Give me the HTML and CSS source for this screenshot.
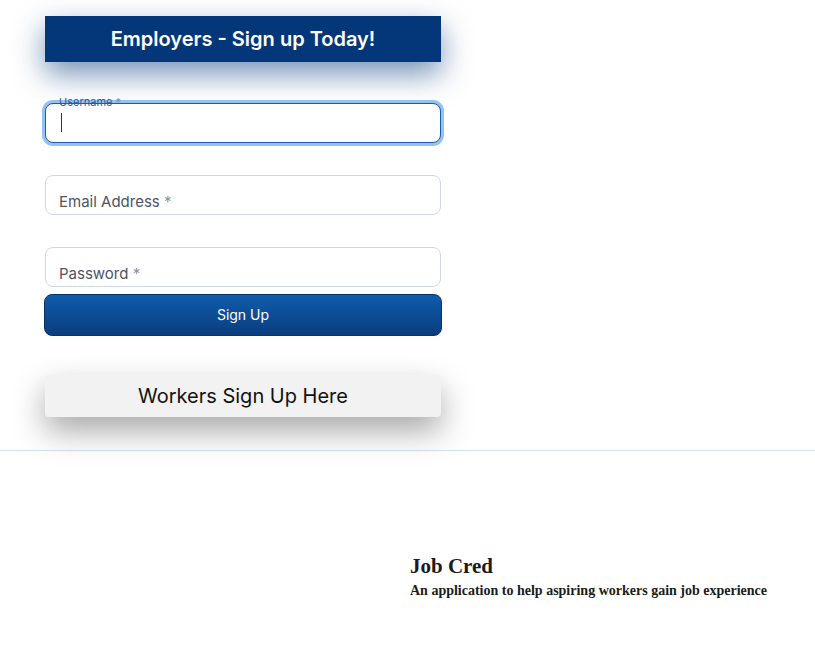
FILE: index.html
```html
<!DOCTYPE html>
<html>
<head>
<meta charset="utf-8">
<link rel="stylesheet" href="styles.css">
</head>
<body>
<main class="panel">
  <h2 class="banner">Employers - Sign up Today!</h2>
  <form class="form">
    <div class="field focused">
      <span class="label small">Username <span class="req">*</span></span>
      <span class="caret"></span>
    </div>
    <div class="field">
      <span class="label">Email Address <span class="req">*</span></span>
    </div>
    <div class="field">
      <span class="label">Password <span class="req">*</span></span>
    </div>
    <button type="button" class="signup">Sign Up</button>
  </form>
  <button type="button" class="workers">Workers Sign Up Here</button>
</main>
<hr class="divider">
<footer class="footer">
  <div></div>
  <div class="brand">
    <div class="title">Job Cred</div>
    <div class="tagline">An application to help aspiring workers gain job experience</div>
  </div>
</footer>
</body>
</html>
```

FILE: styles.css
```css
html, body { margin: 0; padding: 0; background: #fff; }
body { font-family: Inter, "Noto Sans", sans-serif; }

.panel {
  width: 396px;
  padding: 16px 0 0 45px;
  display: flex;
  flex-direction: column;
}

.banner {
  margin: 0;
  height: 46px;
  background: #03377a;
  color: #fff;
  font-size: 20px;
  font-weight: 600;
  display: flex;
  align-items: center;
  justify-content: center;
  box-shadow: 0 12px 30px rgba(3, 55, 122, 0.55);
}

.form {
  margin-top: 41px;
  display: flex;
  flex-direction: column;
}

.field {
  position: relative;
  height: 40px;
  box-sizing: border-box;
  border: 1px solid #cdd8e4;
  border-radius: 8px;
  background: #fff;
  margin-bottom: 32px;
}
.field:nth-child(3) { margin-bottom: 7px; }

.field.focused {
  border-color: #1a5cab;
  box-shadow: 0 0 0 3px #93c2f3;
}

.label {
  position: absolute;
  left: 13px;
  bottom: 3px;
  font-size: 15px;
  color: #4b5563;
}
.label .req { color: #8a929c; }

.label.small {
  top: -9px;
  bottom: auto;
  font-size: 11px;
  color: #2d5d9c;
}
.label.small .req { color: #6c8fbd; }

.caret {
  position: absolute;
  left: 15px;
  top: 9px;
  width: 1px;
  height: 19px;
  background: #333;
}

.signup {
  margin-left: -1px;
  width: 398px;
  height: 42px;
  padding-bottom: 2px;
  border: 1px solid #0a3366;
  border-radius: 8px;
  background: linear-gradient(#0f5cae, #0a3d7c);
  color: #fff;
  font-family: Inter, sans-serif;
  font-size: 14px;
}

.workers {
  margin-top: 39px;
  height: 42px;
  border: none;
  border-radius: 4px;
  background: #f2f2f2;
  color: #111;
  font-family: Inter, sans-serif;
  font-size: 20px;
  box-shadow: 0 14px 32px rgba(0, 0, 0, 0.35);
}

.divider {
  margin: 33px 0 0;
  border: none;
  border-top: 1px solid #d3e3ee;
  height: 0;
}

.footer {
  display: grid;
  grid-template-columns: 410px 1fr;
  padding-top: 103px;
  font-family: "Liberation Serif", serif;
  font-weight: bold;
  color: #1b1b1b;
}
.title { font-size: 21px; line-height: 24px; }
.tagline { font-size: 14px; line-height: 18px; margin-top: 4px; }
```
